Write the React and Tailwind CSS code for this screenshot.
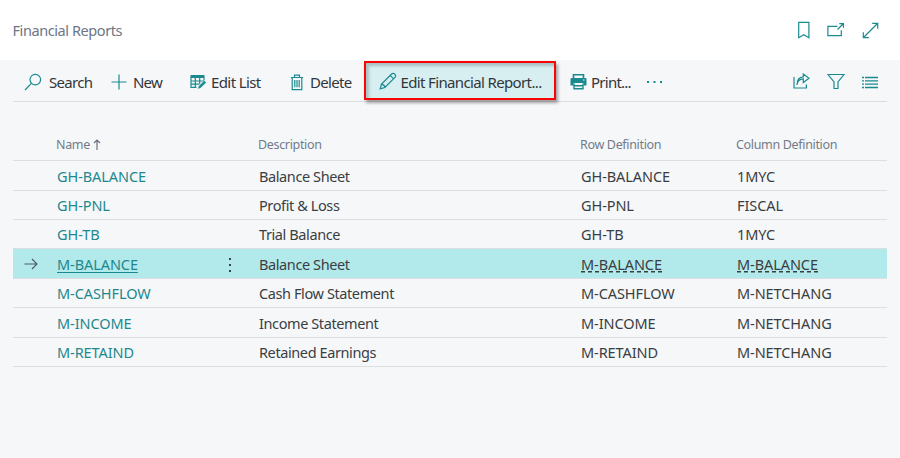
import React from "react";
import clsx from "clsx";

const rows = [
  { name: "GH-BALANCE", desc: "Balance Sheet", row: "GH-BALANCE", col: "1MYC", h: "h-[30px] pt-[2px]" },
  { name: "GH-PNL", desc: "Profit & Loss", row: "GH-PNL", col: "FISCAL", h: "h-[29px] pt-px" },
  { name: "GH-TB", desc: "Trial Balance", row: "GH-TB", col: "1MYC", h: "h-[29px] pt-px" },
  { name: "M-BALANCE", desc: "Balance Sheet", row: "M-BALANCE", col: "M-BALANCE", h: "h-[30px] pt-[2px]", selected: true },
  { name: "M-CASHFLOW", desc: "Cash Flow Statement", row: "M-CASHFLOW", col: "M-NETCHANG", h: "h-[29px] pt-px" },
  { name: "M-INCOME", desc: "Income Statement", row: "M-INCOME", col: "M-NETCHANG", h: "h-[30px] pt-[2px]" },
  { name: "M-RETAIND", desc: "Retained Earnings", row: "M-RETAIND", col: "M-NETCHANG", h: "h-[29px] pt-px" },
];

function Icon({ w, h, className, sw = 1.2, children }) {
  return (
    <svg
      width={w}
      height={h}
      viewBox={`0 0 ${w} ${h}`}
      fill="none"
      stroke="currentColor"
      strokeWidth={sw}
      className={clsx("shrink-0 text-[#1a8a90]", className)}
    >
      {children}
    </svg>
  );
}

function Header() {
  return (
    <header className="flex h-[60px] items-center bg-white pl-[12.5px] text-[#6b7686]">
      <h1 className="w-[779.5px] pt-px text-[14.5px] tracking-[-0.42px]">Financial Reports</h1>
      <Icon w={12} h={18} className="ml-[5.5px]">
        <path d="M.7 1.4h10.2v15.4L5.8 13.8.7 16.8z" />
      </Icon>
      <Icon w={18} h={16} className="ml-[17.5px]">
        <path d="M10.5 4.3H.9v9.3h13.4V8.2M10.5 7.5l5.5-5.5M12.3 1.7h4.1v4.1" />
      </Icon>
      <Icon w={17} h={17} className="ml-[17px]">
        <path d="M1.5 15.5l14-14M10.2 1.3h5.5v5.5M1.3 10.2v5.5h5.5" />
      </Icon>
    </header>
  );
}

function Toolbar() {
  return (
    <div className="mx-[13px] flex h-[42px] items-center border-b border-[#dadde1] pt-[3px] text-[15px] tracking-[-0.6px] text-[#323639]">
      <div className="flex w-[98px] items-center">
        <Icon w={18} h={18} className="-mt-px ml-[11px] mr-[7px]">
          <circle cx="11.3" cy="6.6" r="5.3" />
          <path d="M7.4 10.4L1 17" />
        </Icon>
        <span className="tracking-[-0.7px]">Search</span>
      </div>
      <div className="flex w-[78px] items-center">
        <Icon w={16} h={16} className="mr-[6px]">
          <path d="M8 .5v15M.5 8h15" />
        </Icon>
        <span className="tracking-[-0.8px]">New</span>
      </div>
      <div className="flex w-[101px] items-center">
        <Icon w={17} h={16} className="ml-px mr-[4px] text-[#0b8087]">
          <path d="M.5 1h14v3H.5z" fill="currentColor" stroke="none" />
          <path d="M1 3.5v9.9h5.5M1 7h13M1 10.2h8.5M5.3 3.5v10M9.7 3.5v6.2M14 3.5v3" />
          <path d="M7.6 15.2l1-3.2 5.6-5.6 2.1 2.1-5.6 5.6z" fill="currentColor" stroke="#f6f7f9" strokeWidth=".5" />
        </Icon>
        <span className="tracking-[-0.6px]">Edit List</span>
      </div>
      <div className="flex w-[74px] items-center">
        <Icon w={14} h={17} className="mr-[6px]">
          <path d="M.8 3.5h12.4M4.5 3.5V1.2h5v2.3M2.2 3.5v12.2h9.6V3.5M4.8 6v7.3M7 6v7.3M9.2 6v7.3" />
        </Icon>
        <span className="tracking-[-0.7px]">Delete</span>
      </div>
      <div className="-mt-[3px] flex h-[39px] w-[192px] shrink-0 items-center border-2 border-[#fa0404] bg-[#d7eff1] pt-[3px] shadow-[2px_3px_3px_rgba(0,0,0,0.35),inset_3px_3px_3px_rgba(80,110,115,0.35)]">
        <Icon w={18} h={18} className="-mt-[2px] ml-[13px] mr-[3.5px]">
          <path d="M1.2 16.8l1.3-4.7L12.6 2a2.1 2.1 0 0 1 3 0l.4.4a2.1 2.1 0 0 1 0 3L5.9 15.5zM11.2 3.4l3.4 3.4M2.5 12.1c1.6.2 3.2 1.8 3.4 3.4" />
        </Icon>
        <span className="whitespace-nowrap tracking-[-0.64px]">Edit Financial Report...</span>
      </div>
      <div className="ml-[14px] flex w-[76px] items-center">
        <Icon w={17} h={16} className="-mt-px mr-[4px] text-[#0b8087]">
          <path d="M3.5 4.5V.8h10v3.7" strokeWidth="1.6" />
          <path d="M1.8 4h13.4q1.3 0 1.3 1.3V11.5h-3V9h-10v2.5h-3V5.3Q.5 4 1.8 4z" fill="currentColor" stroke="none" />
          <path d="M4 9.5v5.2h9V9.5M4 11.8h9" strokeWidth="1.4" />
          <path d="M13 6h1.5" stroke="#f6f7f9" />
        </Icon>
        <span className="tracking-[-0.75px]">Print...</span>
      </div>
      <Icon w={17} h={4} className="-mt-px">
        <path d="M1 2h2M7.5 2h2M14 2h2" strokeWidth="2" />
      </Icon>
      <Icon w={17} h={16} className="-mt-[2px] ml-[129.5px]">
        <path d="M1 4v11h12.4v-3.5M4 12c.4-4 2.5-6 6.3-6.1V9.5L16 5.2 10.3 1v2.8C6 4 4 7 4 12z" />
      </Icon>
      <Icon w={18} h={17} className="-mt-px ml-[17px]">
        <path d="M1 1.5h16L11 9v6.5H7V9z" />
      </Icon>
      <Icon w={16} h={13} sw={1.3} className="ml-[17px]">
        <path d="M0 1.5h2M3 1.5h13M0 4.8h2M3 4.8h13M0 8.2h2M3 8.2h13M0 11.5h2M3 11.5h13" />
      </Icon>
    </div>
  );
}

const grid = "grid grid-cols-[44px_202px_322px_156px_1fr] items-center";

function Row({ name, desc, row, col, h, selected }) {
  const dashed =
    "justify-self-start bg-[repeating-linear-gradient(90deg,#3b3e41_0_4.5px,transparent_4.5px_7px)] bg-[length:100%_1.5px] bg-[position:0_17.5px] bg-no-repeat";
  return (
    <div className={clsx(grid, h, "border-b border-[#dcdfe2]", selected && "bg-[#b2eaec]")}>
      <div className="pl-[11px]">
        {selected && (
          <Icon w={14} h={12} sw={1.1} className="-mt-px text-[#4b5a5e]">
            <path d="M.5 6h12.5M8 1l5 5-5 5" />
          </Icon>
        )}
      </div>
      <div className="flex items-center justify-between pr-[27px] tracking-[-0.08px] text-[#1d888d]">
        <span className={selected ? "underline decoration-1 underline-offset-[2px]" : ""}>{name}</span>
        {selected && (
          <Icon w={4} h={16} sw={2} className="text-[#3a4548]">
            <path d="M2 1v2M2 7v2M2 13v2" />
          </Icon>
        )}
      </div>
      <span className="tracking-[-0.4px]">{desc}</span>
      <span className={clsx(selected && dashed)}>{row}</span>
      <span className={clsx(selected && dashed)}>{col}</span>
    </div>
  );
}

export default function App() {
  return (
    <div className="h-[458px] w-[900px] overflow-hidden bg-[#f6f7f9] font-['Noto_Sans',sans-serif]">
      <Header />
      <Toolbar />
      <main className="mx-[13px] pt-[25px]">
        <div className={clsx(grid, "h-[34px] border-b border-[#dcdfe2] pt-[4px] text-[12.5px] tracking-[-0.33px] text-[#727b89]")}>
          <span />
          <span className="-ml-px flex items-center gap-[3px]">
            Name
            <Icon w={8} h={11} className="-mt-[3px] text-[#6a7280]">
              <path d="M4 11V1M1 4l3-3 3 3" />
            </Icon>
          </span>
          <span className="-ml-px">Description</span>
          <span className="-ml-px">Row Definition</span>
          <span className="-ml-px">Column Definition</span>
        </div>
        <div className="text-[14.5px] tracking-[-0.08px] text-[#3b3e41]">
          {rows.map((r) => (
            <Row key={r.name} {...r} />
          ))}
        </div>
      </main>
    </div>
  );
}
